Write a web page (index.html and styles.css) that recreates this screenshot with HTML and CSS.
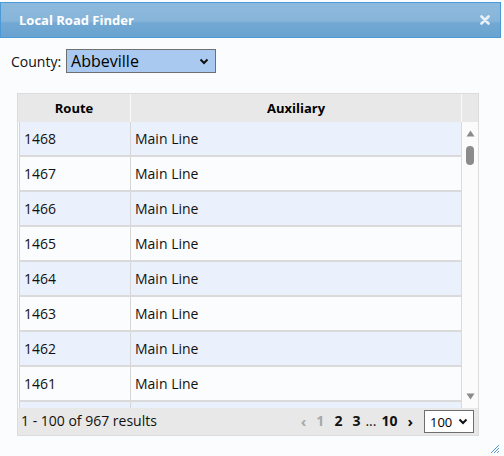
FILE: index.html
```html
<!DOCTYPE html>
<html lang="en">

<head>
    <meta charset="UTF-8">
    <meta name="viewport" content="width=device-width, initial-scale=1.0">
    <title>Local Road Finder</title>

    <link rel="stylesheet" href="styles.css">
</head>

<body>
    <div class="window">

        <div class="titlebar">
            <span class="title">Local Road Finder</span>
            <svg class="close" width="10" height="10" viewBox="0 0 10 10">
                <path d="M1.5 1.5 L8.5 8.5 M8.5 1.5 L1.5 8.5" stroke="#e8f0f8" stroke-width="2.6" stroke-linecap="round" />
            </svg>
        </div>

        <div class="county">
            <span class="county-label">County:</span>
            <div class="county-select">
                <span>Abbeville</span>
                <svg width="10" height="7" viewBox="0 0 10 7">
                    <path d="M1.5 1.5 L5 5 L8.5 1.5" fill="none" stroke="#111" stroke-width="2" />
                </svg>
            </div>
        </div>

        <div class="grid">
            <div class="grid-head">
                <div class="head-cell">Route</div>
                <div class="head-cell">Auxiliary</div>
                <div class="head-cell head-spacer"></div>
            </div>

            <div class="grid-body">
                <div class="rows">
                    <div class="row alt"><div class="cell">1468</div><div class="cell">Main Line</div></div>
                    <div class="row"><div class="cell">1467</div><div class="cell">Main Line</div></div>
                    <div class="row alt"><div class="cell">1466</div><div class="cell">Main Line</div></div>
                    <div class="row"><div class="cell">1465</div><div class="cell">Main Line</div></div>
                    <div class="row alt"><div class="cell">1464</div><div class="cell">Main Line</div></div>
                    <div class="row"><div class="cell">1463</div><div class="cell">Main Line</div></div>
                    <div class="row alt"><div class="cell">1462</div><div class="cell">Main Line</div></div>
                    <div class="row"><div class="cell">1461</div><div class="cell">Main Line</div></div>
                    <!-- next row only peeks in under the fold -->
                    <div class="row alt"><div class="cell"></div><div class="cell"></div></div>
                </div>

                <div class="scrollbar">
                    <svg width="9" height="7" viewBox="0 0 9 7"><path d="M0.5 6.5 L4.5 0.5 L8.5 6.5 Z" fill="#8c8a88" /></svg>
                    <div class="thumb"></div>
                    <div class="track"></div>
                    <svg width="9" height="7" viewBox="0 0 9 7"><path d="M0.5 0.5 L4.5 6.5 L8.5 0.5 Z" fill="#8c8a88" /></svg>
                </div>
            </div>

            <div class="grid-foot">
                <span class="results">1 - 100 of 967 results</span>
                <div class="pager">
                    <span class="page-arrow disabled">&lsaquo;</span>
                    <span class="page disabled">1</span>
                    <span class="page">2</span>
                    <span class="page">3</span>
                    <span class="page dots">...</span>
                    <span class="page">10</span>
                    <span class="page-arrow">&rsaquo;</span>
                    <div class="page-size">
                        <span>100</span>
                        <svg width="10" height="7" viewBox="0 0 10 7">
                            <path d="M1.5 1.5 L5 5 L8.5 1.5" fill="none" stroke="#111" stroke-width="2" />
                        </svg>
                    </div>
                </div>
            </div>
        </div>

        <svg class="resize" width="12" height="12" viewBox="0 0 12 12">
            <path d="M11 3 L3 11 M11 6 L6 11 M11 9 L9 11" stroke="#4f95d6" stroke-width="1" />
        </svg>
    </div>
</body>

</html>
```

FILE: styles.css
```css
* {
    box-sizing: border-box;
}

body {
    margin: 0;
    background-color: #fbfcfd;
    font-family: "Segoe UI", "Open Sans", sans-serif;
    font-size: 14px;
    color: #000;
}

.window {
    position: relative;
    width: 501px;
    height: 456px;
    padding-top: 2px;
}

.titlebar {
    height: 36px;
    border: 1px solid #4a9ad8;
    background-image: linear-gradient(to bottom, #8dbadc, #87b5d9 52%, #71a8d3 60%, #6aa3d0);
    display: flex;
    align-items: center;
    justify-content: space-between;
    padding: 0 10px 0 18px;
}

.title {
    color: #fff;
    font-weight: bold;
    font-size: 13px;
}

.county {
    display: flex;
    align-items: center;
    gap: 5px;
    padding: 11px 0 0 11px;
}

.county-label {
    color: #111;
}

.county-select {
    width: 150px;
    height: 24px;
    border: 1px solid #707070;
    background-color: #a9c9f0;
    display: flex;
    align-items: center;
    justify-content: space-between;
    padding: 0 6px 0 4px;
    font-size: 16px;
}

.grid {
    margin: 20px 0 0 17px;
    width: 462px;
    border: 1px solid #dcdcdc;
}

.grid-head {
    display: grid;
    grid-template-columns: 113px 331px 1fr;
    height: 28px;
    background-color: #e8e8e8;
    font-size: 13px;
}

.head-cell {
    display: flex;
    align-items: center;
    justify-content: center;
    font-weight: bold;
    border-right: 1px solid #fafafa;
}

.head-spacer {
    border-right: none;
}

.grid-body {
    display: flex;
    height: 286px;
}

.rows {
    flex: 1;
    overflow: hidden;
    padding-left: 1px;
}

.row {
    display: grid;
    grid-template-columns: 111px 1fr;
    height: 35px;
    border-bottom: 2px solid #dadada;
    border-right: 1px solid #dadada;
}

.row.alt {
    background-color: #ebf1fc;
}

.cell {
    display: flex;
    align-items: center;
    padding-left: 4px;
    border-left: 1px solid #d6d6d6;
    color: #111;
}

.scrollbar {
    width: 16px;
    background-color: #fbfbfb;
    display: flex;
    flex-direction: column;
    align-items: center;
    padding: 8px 0 8px 0;
}

.thumb {
    width: 8px;
    height: 19px;
    margin-top: 9px;
    border-radius: 4px;
    background-color: #8b8b8b;
}

.track {
    flex: 1;
}

.grid-foot {
    display: flex;
    align-items: center;
    justify-content: space-between;
    height: 27px;
    background-color: #e8e8e8;
    padding: 0 4px 2px 3px;
}

.results {
    color: #111;
}

.pager {
    display: flex;
    align-items: center;
}

.page,
.page-arrow {
    font-weight: bold;
    color: #111;
    padding: 0 5px;
}

.page-arrow {
    font-size: 15px;
}

.disabled {
    color: #a8a8a8;
}

.dots {
    font-weight: normal;
    padding: 0;
}

.page-size {
    width: 50px;
    height: 23px;
    margin: 2px 0 0 6px;
    border: 1px solid #6e6e6e;
    background-color: #fff;
    display: flex;
    align-items: center;
    justify-content: space-between;
    padding: 0 5px 0 5px;
    font-size: 13px;
}

.resize {
    position: absolute;
    right: 1px;
    bottom: 2px;
}
```
